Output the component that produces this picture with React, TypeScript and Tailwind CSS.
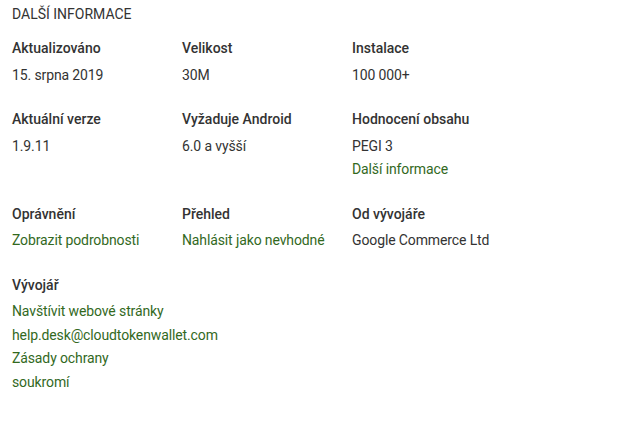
const rows: { label: string; values: { text: string; link?: boolean }[] }[][] = [
  [
    { label: "Aktualizováno", values: [{ text: "15. srpna 2019" }] },
    { label: "Velikost", values: [{ text: "30M" }] },
    { label: "Instalace", values: [{ text: "100 000+" }] },
  ],
  [
    { label: "Aktuální verze", values: [{ text: "1.9.11" }] },
    { label: "Vyžaduje Android", values: [{ text: "6.0 a vyšší" }] },
    {
      label: "Hodnocení obsahu",
      values: [{ text: "PEGI 3" }, { text: "Další informace", link: true }],
    },
  ],
  [
    { label: "Oprávnění", values: [{ text: "Zobrazit podrobnosti", link: true }] },
    { label: "Přehled", values: [{ text: "Nahlásit jako nevhodné", link: true }] },
    { label: "Od vývojáře", values: [{ text: "Google Commerce Ltd" }] },
  ],
  [
    {
      label: "Vývojář",
      values: [
        { text: "Navštívit webové stránky", link: true },
        { text: "help.desk@cloudtokenwallet.com", link: true },
        { text: "Zásady ochrany soukromí", link: true },
      ],
    },
  ],
];

export default function App() {
  return (
    <div className="min-h-screen bg-white pl-3 pt-[2px] font-['Roboto',sans-serif] text-sm leading-6 text-[#333333]">
      <h2 className="uppercase">Další informace</h2>
      <div className="mt-[10px] flex flex-col gap-5">
        {rows.map((row, i) => (
          <div key={i} className="flex">
            {row.map((item) => (
              <div key={item.label} className="w-[170px] shrink-0 pr-[13px]">
                <div className="mb-[3.5px] font-medium">{item.label}</div>
                {item.values.map((v) => (
                  <div
                    key={v.text}
                    className={
                      v.link
                        ? "leading-[23.5px] tracking-[-0.12px] text-[#33691e]"
                        : "leading-[23.5px] tracking-[-0.12px]"
                    }
                  >
                    {v.text}
                  </div>
                ))}
              </div>
            ))}
          </div>
        ))}
      </div>
    </div>
  );
}
